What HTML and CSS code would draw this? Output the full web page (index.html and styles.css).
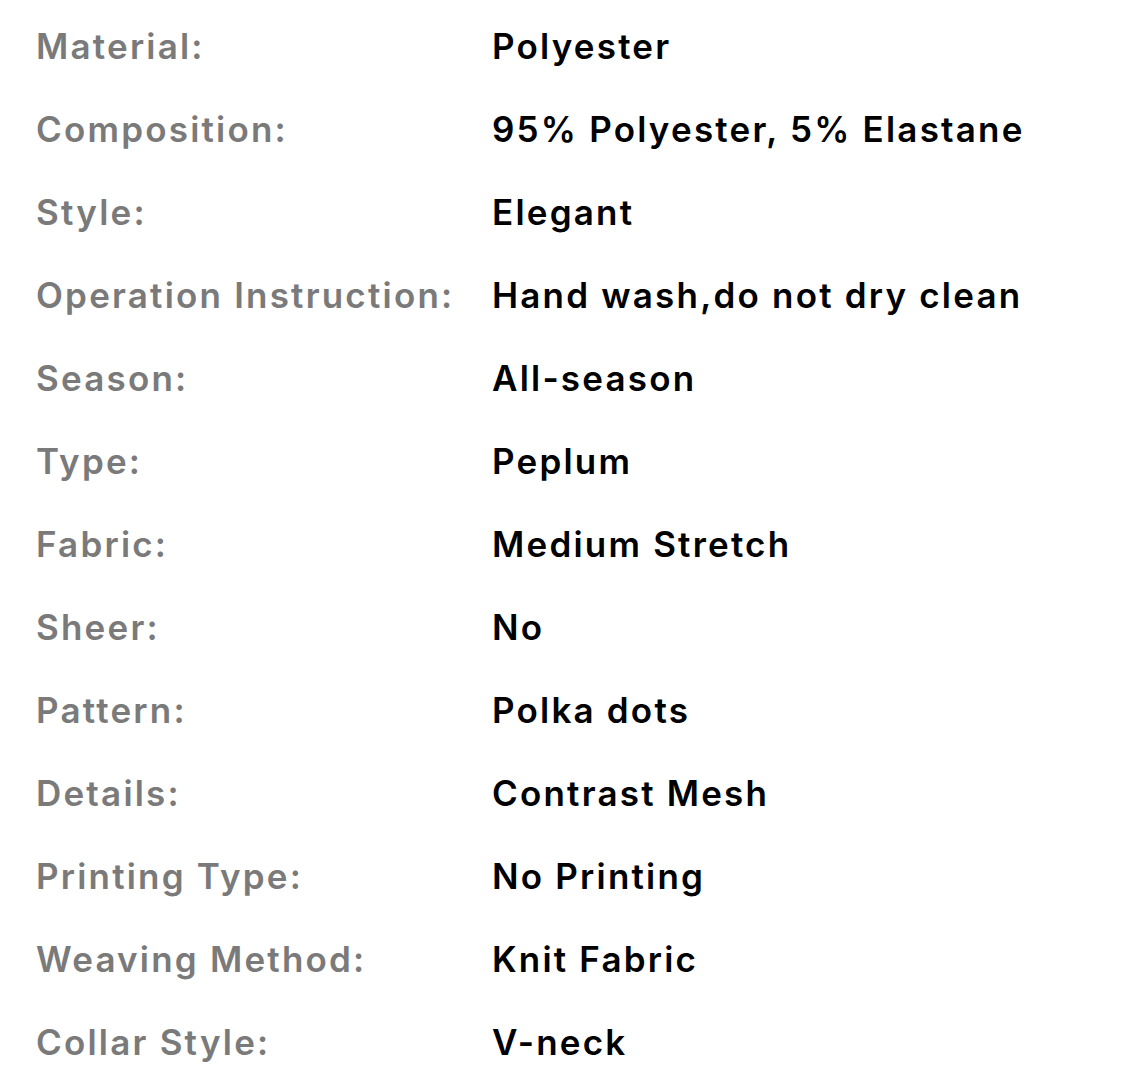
FILE: index.html
```html
<!DOCTYPE html>
<html>
<head>
<meta charset="utf-8">
<link rel="stylesheet" href="styles.css">
</head>
<body>
<div class="specs">
  <div class="row"><span class="label">Material:</span><span class="value">Polyester</span></div>
  <div class="row"><span class="label">Composition:</span><span class="value">95% Polyester, 5% Elastane</span></div>
  <div class="row"><span class="label">Style:</span><span class="value">Elegant</span></div>
  <div class="row"><span class="label">Operation Instruction:</span><span class="value">Hand wash,do not dry clean</span></div>
  <div class="row"><span class="label">Season:</span><span class="value">All-season</span></div>
  <div class="row"><span class="label">Type:</span><span class="value">Peplum</span></div>
  <div class="row"><span class="label">Fabric:</span><span class="value">Medium Stretch</span></div>
  <div class="row"><span class="label">Sheer:</span><span class="value">No</span></div>
  <div class="row"><span class="label">Pattern:</span><span class="value">Polka dots</span></div>
  <div class="row"><span class="label">Details:</span><span class="value">Contrast Mesh</span></div>
  <div class="row"><span class="label">Printing Type:</span><span class="value">No Printing</span></div>
  <div class="row"><span class="label">Weaving Method:</span><span class="value">Knit Fabric</span></div>
  <div class="row"><span class="label">Collar Style:</span><span class="value">V-neck</span></div>
</div>
</body>
</html>
```
FILE: styles.css
```css
html, body {
  margin: 0;
  padding: 0;
  background: #ffffff;
}
body {
  font-family: Inter, "Liberation Sans", sans-serif;
  font-size: 35px;
  font-weight: 600;
  letter-spacing: 2.2px;
}
.specs {
  padding: 5px 0 0 36px;
}
.row {
  display: grid;
  grid-template-columns: 456px auto;
  height: 83px;
  line-height: 83px;
  white-space: nowrap;
}
.label {
  color: #7a7a7a;
}
.value {
  color: #000000;
}
```
